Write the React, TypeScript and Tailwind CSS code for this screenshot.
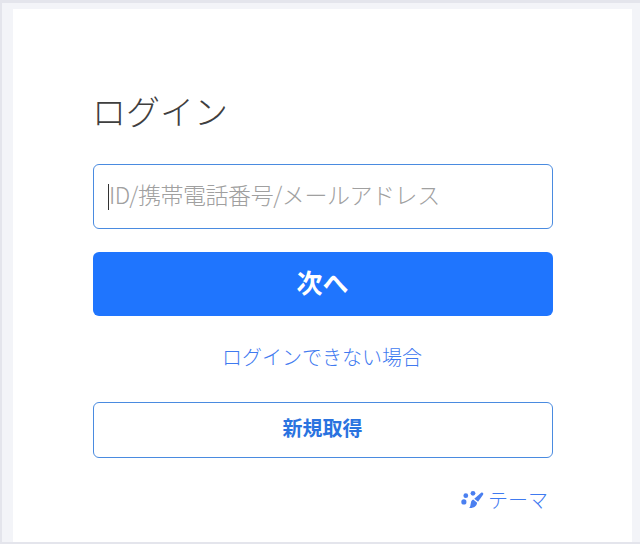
import React from 'react'

function ThemeIcon() {
  return (
    <svg width="23" height="20" viewBox="0 0 24 20" fill="#4a7ff0">
      <circle cx="3" cy="12" r="2.7" />
      <circle cx="5" cy="5.5" r="2.5" />
      <circle cx="12.5" cy="3" r="2.5" />
      <path d="M21 2.5c1.4-1 2.9.5 2 1.9l-5.2 7.4-4-3.2z" />
      <path d="M12.8 9.6l4 3.3c-.3 3.6-3.8 6-8.4 5.4 1.8-1.6 1.2-3 1.9-5.3.4-1.7 1-3 2.5-3.4z" />
    </svg>
  )
}

export default function App() {
  return (
    <div
      className="h-[544px] w-[640px] bg-[#f3f4f8] border-t-[3px] border-l-2 border-b-2 border-r-0 border-[#e4e5ec] pt-[6px] pl-[11px] pr-[8px]"
      style={{ fontFamily: '"Noto Sans CJK JP", "Noto Sans", sans-serif' }}
    >
      <div className="h-full bg-white pl-[80px] pr-[79px] pt-[78px] flex flex-col">
        <h1 className="text-[34px] leading-[50px] font-light text-[#3f3f3f] h-[50px] -ml-[1px] -mt-[1px] mb-[1px]">ログイン</h1>
        <div className="mt-[27px] h-[65px] rounded-[6px] border border-[#4a8be0] flex items-center pl-[14px]">
          <span className="w-px h-[26px] bg-[#333333]" />
          <span className="text-[23px] font-light text-[#a0a0a0] whitespace-nowrap tracking-[-0.45px] pb-[4px]">ID/携帯電話番号/メールアドレス</span>
        </div>
        <button className="mt-[23px] h-[64px] pb-[5px] pr-[1px] rounded-[6px] bg-[#1f75fe] text-white text-[26px] font-bold">次へ</button>
        <a className="mt-[26px] h-[30px] text-center text-[20px] leading-[30px] font-light text-[#3f7af0] pr-[2px]">ログインできない場合</a>
        <button className="mt-[30px] h-[56px] pb-[4px] pr-[1px] rounded-[6px] border border-[#4a8be0] bg-white text-[#2a73e0] text-[20px] font-bold">新規取得</button>
        <div className="mt-[27px] flex items-center justify-end gap-[4px] pr-[5px] text-[20px] leading-[30px] font-light text-[#3f7af0]">
          <ThemeIcon />
          <span>テーマ</span>
        </div>
      </div>
    </div>
  )
}
